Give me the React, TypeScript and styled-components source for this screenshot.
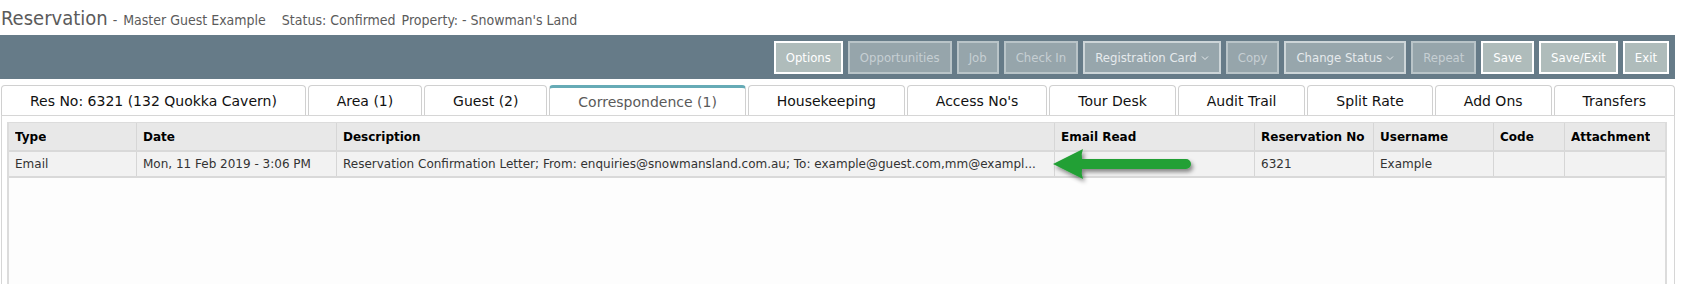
import styled, { createGlobalStyle } from "styled-components";

const GlobalStyle = createGlobalStyle`
  html, body {
    margin: 0;
    padding: 0;
    background: #fff;
  }
  body {
    font-family: "DejaVu Sans", Verdana, sans-serif;
    color: #222;
  }
`;

const Page = styled.div`
  width: 1685px;
  height: 284px;
  overflow: hidden;
  display: flex;
  flex-direction: column;
`;

const TitleBar = styled.div`
  height: 35px;
  box-sizing: border-box;
  display: flex;
  align-items: baseline;
  padding: 6px 0 0 1px;
  font-family: "DejaVu Sans Condensed", "DejaVu Sans", sans-serif;
  color: #5b5b5b;
  white-space: nowrap;
`;

const Title = styled.span`
  font-size: 20px;
`;

const Meta = styled.span<{ $gap?: number }>`
  font-size: 14px;
  margin-left: ${(p) => p.$gap ?? 6}px;
`;

const Toolbar = styled.div`
  height: 44px;
  margin-right: 10px;
  box-sizing: border-box;
  padding: 0 6px;
  background: #667b88;
  display: flex;
  justify-content: flex-end;
  align-items: center;
  gap: 5px;
`;

type Variant = "active" | "disabled" | "menu";

const buttonColours: Record<Variant, { bg: string; border: string; text: string }> = {
  active: { bg: "#afbcbb", border: "#ffffff", text: "#ffffff" },
  disabled: { bg: "#96a5ab", border: "#b9c4c8", text: "#c6cfd3" },
  menu: { bg: "#97a6ac", border: "#cdd5d8", text: "#e6eaec" },
};

const ToolButton = styled.button<{ $variant: Variant }>`
  height: 33px;
  box-sizing: border-box;
  padding: 0 10px;
  border: 2px solid ${(p) => buttonColours[p.$variant].border};
  background: ${(p) => buttonColours[p.$variant].bg};
  color: ${(p) => buttonColours[p.$variant].text};
  font-family: "DejaVu Sans Condensed", "DejaVu Sans", sans-serif;
  font-size: 13px;
  display: flex;
  align-items: center;
  gap: 4px;
  cursor: ${(p) => (p.$variant === "disabled" ? "default" : "pointer")};
`;

const Caret = styled.svg`
  width: 8px;
  height: 8px;
  margin-top: 2px;
`;

const TabStrip = styled.div`
  display: flex;
  gap: 2px;
  height: 30px;
  margin: 6px 10px 0 1px;
`;

const Tab = styled.div<{ $active?: boolean }>`
  flex: 1 1 auto;
  display: flex;
  align-items: center;
  justify-content: center;
  padding: 0 18px;
  box-sizing: border-box;
  background: #fff;
  border: 1px solid #d0d0d0;
  border-top: ${(p) => (p.$active ? "3px solid #66abb6" : "1px solid #d0d0d0")};
  border-bottom: none;
  border-radius: 4px 4px 0 0;
  font-size: 14px;
  color: ${(p) => (p.$active ? "#5a5a5a" : "#111")};
  white-space: nowrap;
`;

const Panel = styled.div`
  flex: 1;
  display: flex;
  margin: 0 10px 0 1px;
  padding: 6px 7px 0 5px;
  border: 1px solid #d6d6d6;
  border-bottom: none;
`;

const Grid = styled.div`
  flex: 1;
  background: #fdfdfd;
  border: 2px solid #dcdcdc;
  border-top-width: 1px;
  border-bottom: none;
`;

const columns = "128px 200px 718px 200px 119px 120px 71px 100px";

const Row = styled.div<{ $head?: boolean }>`
  display: grid;
  grid-template-columns: ${columns};
  height: ${(p) => (p.$head ? 29 : 26)}px;
  box-sizing: border-box;
  background: ${(p) => (p.$head ? "#e8e8e8" : "#f2f2f2")};
  border-bottom: 2px solid #d9d9d9;
`;

const Cell = styled.div<{ $head?: boolean }>`
  position: relative;
  display: flex;
  align-items: center;
  padding: 0 6px;
  min-width: 0;
  border-right: 1px solid #d6d6d6;
  font-size: 12px;
  font-weight: ${(p) => (p.$head ? "bold" : "normal")};
  color: ${(p) => (p.$head ? "#000" : "#333")};
  &:last-child {
    border-right: none;
  }
`;

const Clip = styled.span`
  overflow: hidden;
  white-space: nowrap;
  text-overflow: ellipsis;
`;

const Arrow = styled.svg`
  position: absolute;
  left: -5px;
  top: -8px;
  width: 146px;
  height: 40px;
  overflow: visible;
  pointer-events: none;
`;

const buttons: { label: string; variant: Variant; caret?: boolean }[] = [
  { label: "Options", variant: "active" },
  { label: "Opportunities", variant: "disabled" },
  { label: "Job", variant: "disabled" },
  { label: "Check In", variant: "disabled" },
  { label: "Registration Card", variant: "menu", caret: true },
  { label: "Copy", variant: "disabled" },
  { label: "Change Status", variant: "menu", caret: true },
  { label: "Repeat", variant: "disabled" },
  { label: "Save", variant: "active" },
  { label: "Save/Exit", variant: "active" },
  { label: "Exit", variant: "active" },
];

const tabs = [
  "Res No: 6321 (132 Quokka Cavern)",
  "Area (1)",
  "Guest (2)",
  "Correspondence (1)",
  "Housekeeping",
  "Access No's",
  "Tour Desk",
  "Audit Trail",
  "Split Rate",
  "Add Ons",
  "Transfers",
];

const headers = [
  "Type",
  "Date",
  "Description",
  "Email Read",
  "Reservation No",
  "Username",
  "Code",
  "Attachment",
];

function App() {
  return (
    <>
      <GlobalStyle />
      <Page>
        <TitleBar>
          <Title>Reservation</Title>
          <Meta $gap={5}>-</Meta>
          <Meta $gap={6}>Master Guest Example</Meta>
          <Meta $gap={16}>Status: Confirmed</Meta>
          <Meta $gap={6}>Property: - Snowman's Land</Meta>
        </TitleBar>

        <Toolbar>
          {buttons.map((b) => (
            <ToolButton key={b.label} $variant={b.variant} type="button">
              {b.label}
              {b.caret && (
                <Caret viewBox="0 0 8 8">
                  <path d="M1 2.5 L4 5.5 L7 2.5" fill="none" stroke="currentColor" strokeWidth="1" />
                </Caret>
              )}
            </ToolButton>
          ))}
        </Toolbar>

        <TabStrip>
          {tabs.map((t) => (
            <Tab key={t} $active={t === "Correspondence (1)"}>
              {t}
            </Tab>
          ))}
        </TabStrip>

        <Panel>
          <Grid>
            <Row $head>
              {headers.map((h) => (
                <Cell key={h} $head>
                  <Clip>{h}</Clip>
                </Cell>
              ))}
            </Row>
            <Row>
              <Cell><Clip>Email</Clip></Cell>
              <Cell><Clip>Mon, 11 Feb 2019 - 3:06 PM</Clip></Cell>
              <Cell>
                <Clip>
                  Reservation Confirmation Letter; From: enquiries@snowmansland.com.au; To: example@guest.com,mm@exampl...
                </Clip>
              </Cell>
              <Cell>
                <Arrow viewBox="0 0 146 40">
                  <defs>
                    <filter id="arrowShadow" x="-10%" y="-30%" width="130%" height="180%">
                      <feDropShadow dx="2" dy="3" stdDeviation="2" floodColor="#000" floodOpacity="0.45" />
                    </filter>
                  </defs>
                  <path
                    d="M3 20 L33 5 Q31 10 32 15 L136 15 A5 5 0 0 1 136 25 L32 25 Q31 30 33 35 Z"
                    fill="#20a034"
                    filter="url(#arrowShadow)"
                  />
                </Arrow>
              </Cell>
              <Cell><Clip>6321</Clip></Cell>
              <Cell><Clip>Example</Clip></Cell>
              <Cell />
              <Cell />
            </Row>
          </Grid>
        </Panel>
      </Page>
    </>
  );
}

export default App;
